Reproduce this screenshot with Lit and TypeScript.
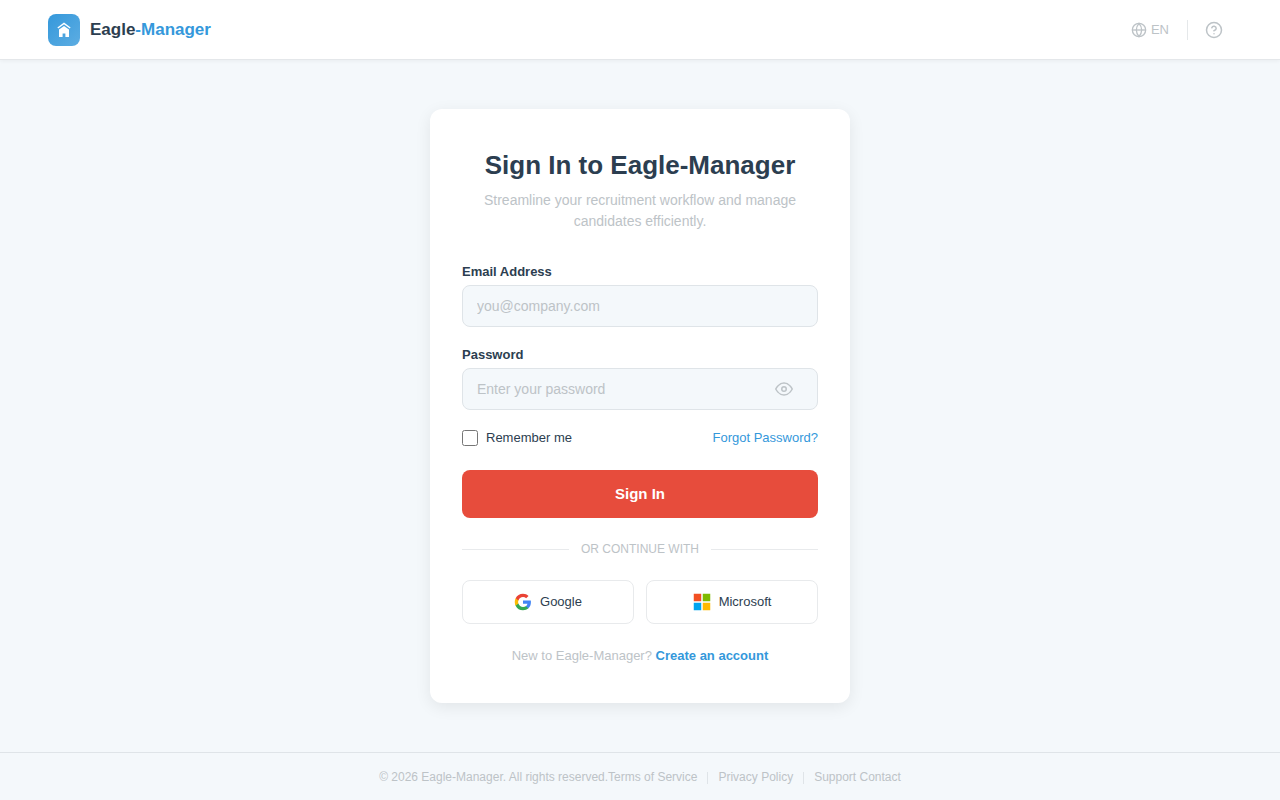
import { LitElement, html, css, svg } from "lit";
import { customElement, state } from "lit/decorators.js";

const houseIcon = svg`<svg width="18" height="18" viewBox="0 0 18 18" aria-hidden="true">
  <path d="M2.8 7 9 2.5 15.2 7" fill="none" stroke="#fff" stroke-width="1.5" stroke-linejoin="miter"/>
  <path d="M4 8.4 9 4.9l5 3.5V16h-3.6v-3.4H7.6V16H4z" fill="#fff"/>
</svg>`;

const globeIcon = svg`<svg width="16" height="16" viewBox="0 0 24 24" fill="none" stroke="currentColor" stroke-width="2" aria-hidden="true">
  <circle cx="12" cy="12" r="10"/><path d="M2 12h20"/>
  <path d="M12 2a15.3 15.3 0 0 1 4 10 15.3 15.3 0 0 1-4 10 15.3 15.3 0 0 1-4-10 15.3 15.3 0 0 1 4-10z"/>
</svg>`;

const helpIcon = svg`<svg width="18" height="18" viewBox="0 0 24 24" fill="none" stroke="currentColor" stroke-width="2" stroke-linecap="round" stroke-linejoin="round" aria-hidden="true">
  <circle cx="12" cy="12" r="10"/><path d="M9.09 9a3 3 0 0 1 5.83 1c0 2-3 3-3 3"/><path d="M12 17h.01"/>
</svg>`;

const eyeIcon = svg`<svg width="18" height="18" viewBox="0 0 24 24" fill="none" stroke="currentColor" stroke-width="2" stroke-linecap="round" stroke-linejoin="round" aria-hidden="true">
  <path d="M1 12s4-8 11-8 11 8 11 8-4 8-11 8-11-8-11-8z"/><circle cx="12" cy="12" r="3"/>
</svg>`;

const googleIcon = svg`<svg width="18" height="18" viewBox="0 0 24 24" aria-hidden="true">
  <path fill="#4285F4" d="M22.56 12.25c0-.78-.07-1.53-.2-2.25H12v4.26h5.92a5.06 5.06 0 0 1-2.2 3.32v2.77h3.57c2.08-1.92 3.27-4.74 3.27-8.1z"/>
  <path fill="#34A853" d="M12 23c2.97 0 5.46-.98 7.28-2.66l-3.57-2.77c-.98.66-2.23 1.06-3.71 1.06-2.86 0-5.29-1.93-6.16-4.53H2.18v2.84A11 11 0 0 0 12 23z"/>
  <path fill="#FBBC05" d="M5.84 14.09A6.6 6.6 0 0 1 5.49 12c0-.73.13-1.43.35-2.09V7.07H2.18A11 11 0 0 0 1 12c0 1.78.43 3.45 1.18 4.93z"/>
  <path fill="#EA4335" d="M12 5.38c1.62 0 3.06.56 4.21 1.64l3.15-3.15C17.45 2.09 14.97 1 12 1A11 11 0 0 0 2.18 7.07l3.66 2.84C6.71 7.31 9.14 5.38 12 5.38z"/>
</svg>`;

const microsoftIcon = svg`<svg width="18" height="18" viewBox="0 0 24 24" aria-hidden="true">
  <path fill="#F25022" d="M1 1h10v10H1z"/><path fill="#7FBA00" d="M13 1h10v10H13z"/>
  <path fill="#00A4EF" d="M1 13h10v10H1z"/><path fill="#FFB900" d="M13 13h10v10H13z"/>
</svg>`;

@customElement("app-root")
export class AppRoot extends LitElement {
  @state() private showPassword = false;

  static styles = css`
    :host {
      display: flex;
      flex-direction: column;
      min-height: 100vh;
      background: #f4f8fb;
      color: #2c3e50;
      font-family: "Liberation Sans", Arial, sans-serif;
      font-size: 13px;
    }
    * { box-sizing: border-box; }
    button, input { font-family: inherit; margin: 0; }
    button { cursor: pointer; }
    a { color: inherit; text-decoration: none; }
    svg { display: block; flex: none; }

    .header {
      display: flex;
      align-items: center;
      justify-content: space-between;
      height: 60px;
      padding: 0 48px;
      background: #fff;
      border-bottom: 1px solid #e4e7ea;
      box-shadow: 0 1px 4px rgba(0, 0, 0, 0.05);
    }
    .brand { display: flex; align-items: center; gap: 10px; font-size: 17px; font-weight: 700; }
    .mark {
      display: grid;
      place-items: center;
      width: 32px;
      height: 32px;
      border-radius: 8px;
      background: linear-gradient(135deg, #3498db, #5dade2);
    }
    .accent { color: #3498db; }
    .tools { display: flex; align-items: center; gap: 8px; color: #bdc3c7; }
    .tool {
      display: flex;
      align-items: center;
      justify-content: center;
      gap: 4px;
      height: 36px;
      padding: 0 10px;
      border: 0;
      background: none;
      color: inherit;
      font-size: 13px;
    }
    .tool.square { width: 36px; padding: 0; }
    .rule { width: 1px; height: 20px; background: #e5e8ea; }

    .main { flex: 1; display: flex; align-items: center; justify-content: center; padding: 48px 16px; }
    .card {
      width: 100%;
      max-width: 420px;
      padding: 40px 32px;
      border-radius: 12px;
      background: #fff;
      box-shadow: 0 4px 16px rgba(0, 0, 0, 0.08);
    }
    .title { margin: 0 0 9px; font-size: 26px; line-height: 32px; text-align: center; }
    .subtitle { margin: 0 0 32px; font-size: 14px; line-height: 21px; color: #bdc3c7; text-align: center; }
    .field { margin-bottom: 20px; }
    .label { display: block; margin-bottom: 6px; line-height: 15px; font-weight: 700; }
    .box {
      display: flex;
      align-items: center;
      height: 42px;
      border: 1px solid #dfe4e8;
      border-radius: 8px;
      background: #f4f8fb;
    }
    .box:focus-within { border-color: #3498db; }
    .input {
      flex: 1;
      min-width: 0;
      height: 100%;
      padding: 0 14px;
      border: 0;
      outline: 0;
      background: none;
      color: inherit;
      font-size: 14px;
    }
    .input::placeholder { color: #bdc3c7; }
    .eye { margin-right: 16px; padding: 8px; border: 0; background: none; color: #bdc3c7; }
    .options {
      display: flex;
      align-items: center;
      justify-content: space-between;
      margin-bottom: 24px;
      line-height: 16px;
    }
    .remember { display: flex; align-items: center; gap: 8px; }
    .check { width: 16px; height: 16px; }
    .submit {
      display: block;
      width: 100%;
      height: 48px;
      border: 0;
      border-radius: 8px;
      background: #e74c3c;
      color: #fff;
      font-size: 15px;
      line-height: 18px;
      font-weight: 700;
    }
    .divider {
      display: flex;
      align-items: center;
      gap: 12px;
      margin: 24px 0;
      line-height: 14px;
      font-size: 12px;
      color: #bdc3c7;
      text-transform: uppercase;
    }
    .divider::before, .divider::after { content: ""; flex: 1; height: 1px; background: #e8eaec; }
    .social { display: grid; grid-template-columns: 1fr 1fr; gap: 12px; margin-bottom: 24px; }
    .provider {
      display: flex;
      align-items: center;
      justify-content: center;
      gap: 8px;
      height: 44px;
      border: 1px solid #e8eaec;
      border-radius: 8px;
      background: #fff;
      color: inherit;
      font-size: 13px;
      line-height: 16px;
    }
    .signup { margin: 0; line-height: 15px; color: #bdc3c7; text-align: center; }
    .create { color: #3498db; font-weight: 700; }

    .footer {
      display: flex;
      flex-wrap: wrap;
      align-items: center;
      justify-content: center;
      padding: 17px 48px 15px;
      border-top: 1px solid #dfe4e8;
      font-size: 12px;
      line-height: 15px;
      color: #bdc3c7;
    }
    .links { display: flex; align-items: center; gap: 10px; }
    .links .rule { height: 12px; background: #dfe4e8; }
  `;

  render() {
    return html`
      <header class="header">
        <a class="brand" href="#">
          <span class="mark">${houseIcon}</span>
          <span>Eagle<span class="accent">-Manager</span></span>
        </a>
        <div class="tools">
          <button class="tool" type="button" aria-label="Language">${globeIcon}<span>EN</span></button>
          <span class="rule"></span>
          <button class="tool square" type="button" aria-label="Help">${helpIcon}</button>
        </div>
      </header>

      <main class="main">
        <section class="card">
          <h1 class="title">Sign In to Eagle-Manager</h1>
          <p class="subtitle">Streamline your recruitment workflow and manage candidates efficiently.</p>
          <form @submit=${(e: Event) => e.preventDefault()}>
            <div class="field">
              <label class="label" for="email">Email Address</label>
              <div class="box">
                <input class="input" id="email" type="email" placeholder="you@company.com" autocomplete="email" />
              </div>
            </div>
            <div class="field">
              <label class="label" for="password">Password</label>
              <div class="box">
                <input class="input" id="password" type=${this.showPassword ? "text" : "password"}
                  placeholder="Enter your password" autocomplete="current-password" />
                <button class="eye" type="button" aria-label="Toggle password visibility"
                  @click=${() => (this.showPassword = !this.showPassword)}>${eyeIcon}</button>
              </div>
            </div>
            <div class="options">
              <label class="remember" for="remember">
                <input class="check" id="remember" type="checkbox" />Remember me
              </label>
              <a class="accent" href="#">Forgot Password?</a>
            </div>
            <button class="submit" type="submit">Sign In</button>
          </form>
          <div class="divider">Or continue with</div>
          <div class="social">
            <button class="provider" type="button">${googleIcon}Google</button>
            <button class="provider" type="button">${microsoftIcon}Microsoft</button>
          </div>
          <p class="signup">New to Eagle-Manager? <a class="create" href="#">Create an account</a></p>
        </section>
      </main>

      <footer class="footer">
        <span>© 2026 Eagle-Manager. All rights reserved.</span>
        <nav class="links">
          <a href="#">Terms of Service</a><span class="rule"></span>
          <a href="#">Privacy Policy</a><span class="rule"></span>
          <a href="#">Support Contact</a>
        </nav>
      </footer>
    `;
  }
}
